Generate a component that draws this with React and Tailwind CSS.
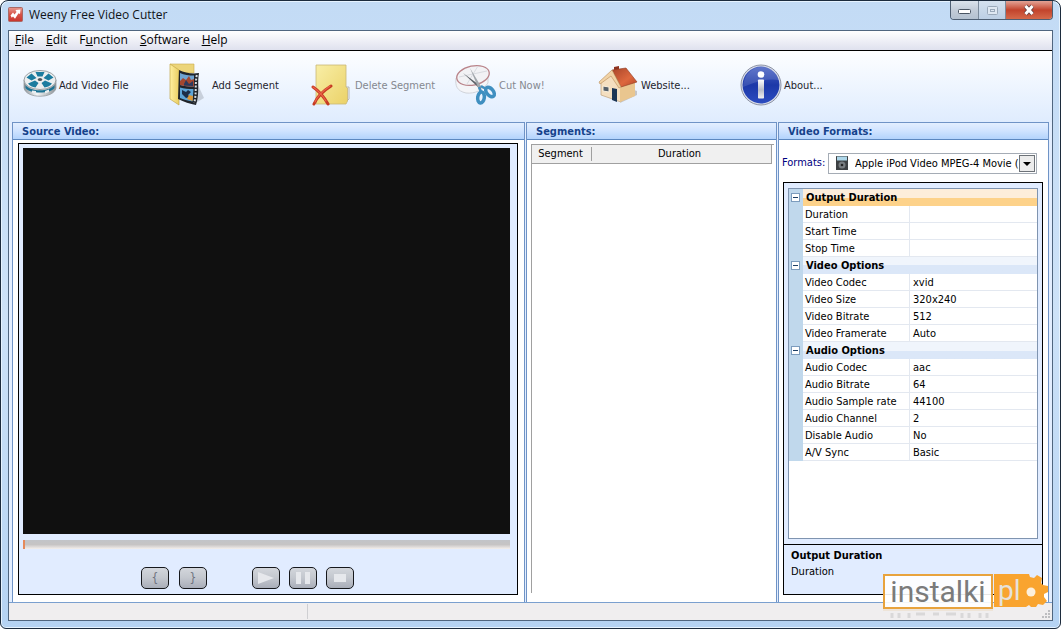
const tool = "flex items-center pb-[3px] text-left";

const SECTIONS = [
  { name: "Output Duration", selected: true, rows: [["Duration", ""], ["Start Time", ""], ["Stop Time", ""]] },
  {
    name: "Video Options",
    rows: [["Video Codec", "xvid"], ["Video Size", "320x240"], ["Video Bitrate", "512"], ["Video Framerate", "Auto"]],
  },
  {
    name: "Audio Options",
    rows: [
      ["Audio Codec", "aac"],
      ["Audio Bitrate", "64"],
      ["Audio Sample rate", "44100"],
      ["Audio Channel", "2"],
      ["Disable Audio", "No"],
      ["A/V Sync", "Basic"],
    ],
  },
];

function AppIcon() {
  return (
    <svg width="15" height="15" viewBox="0 0 15 15" aria-hidden="true">
      <defs>
        <linearGradient id="appRed" x1="0" y1="0" x2="0" y2="1">
          <stop offset="0" stopColor="#e89a90" />
          <stop offset="0.5" stopColor="#d65348" />
          <stop offset="1" stopColor="#c9342d" />
        </linearGradient>
      </defs>
      <rect x="0.5" y="0.5" width="14" height="14" rx="1" fill="url(#appRed)" stroke="#a96a66" />
      <path d="M2.500 8.500l2.500-3 1.500 2 2-2.500-1-2 5-.5-.5 4.500-1.500-.8-3.500 5.500L5 9.500l-1.200 1.200z" fill="#fff" />
    </svg>
  );
}

function ReelIcon() {
  return (
    <svg width="34" height="32" viewBox="0 0 34 32" aria-hidden="true">
      <defs>
        <linearGradient id="reelRim" x1="0" y1="0" x2="1" y2="0">
          <stop offset="0" stopColor="#8d9499" />
          <stop offset="0.4" stopColor="#f4f6f7" />
          <stop offset="1" stopColor="#8e9498" />
        </linearGradient>
      </defs>
      <path d="M1 11v8c2 11 30 11 32 0v-8z" fill="url(#reelRim)" stroke="#8c9296" strokeWidth="0.700" />
      <path d="M2.500 16v3c4 6 25 6 29 0v-3c-5 7-24 7-29 0z" fill="#1c7394" />
      <path d="M9 21.500v2.500l4 1v-3zM22 22v2.500l4-1.500v-2.500z" fill="#e9eef0" />
      <ellipse cx="17" cy="11" rx="16" ry="9.500" fill="#eceff0" stroke="#9aa0a4" />
      <path d="M12.500 3h9l-2 4.500h-5zM3.500 8.500l5-4 5 4.500-5 2.500zM30.500 8.500l-5-4-5 4.500 5 2.500zM5 14.500l7-3 3.500 2.500-3 4.500c-3-.5-6-1.500-7.500-4zM29 14.500l-7-3-3.500 2.500 3 4.500c3-.5 6-1.500 7.500-4z" fill="#1c7c9f" />
      <ellipse cx="17" cy="10.500" rx="2.200" ry="1.600" fill="#4e565b" />
    </svg>
  );
}

function FolderFilmIcon() {
  return (
    <svg width="36" height="44" viewBox="0 0 36 44" aria-hidden="true">
      <defs>
        <linearGradient id="fold" x1="0" y1="0" x2="1" y2="0">
          <stop offset="0" stopColor="#fff0a0" />
          <stop offset="1" stopColor="#e9cd62" />
        </linearGradient>
      </defs>
      <path d="M25 41l10-6-6-13z" fill="#8a8f98" opacity="0.350" />
      <path d="M1 1h24v9H10z" fill="#ecd57a" stroke="#c9ab4d" strokeWidth="0.600" />
      <path d="M1 1l9 6v35l-9-6z" fill="url(#fold)" stroke="#c3a849" strokeWidth="0.700" />
      <path d="M10 7c6 3 13 4 20 3-2 10 1 20-3 32-6-1-12-3-18-6z" fill="#20242a" />
      <path d="M11 10c4 2 9 2.500 14 2.500v11c-5 0-10-.5-14-1.500z" fill="#6fa3d0" />
      <path d="M11 18l3-3 3 2 3-4 2 4 3-1v7.500c-5 0-10-.5-14-1.500z" fill="#a4472f" />
      <path d="M15 21l2-4 3 4 4-3v5l-9-.5z" fill="#2b3a5e" />
      <path d="M11 24.500c4 1 9 1.500 13.500 1.500l-1 12.500c-5-1-9-2-12.500-3.500z" fill="#5da4d6" />
      <path d="M13 27l4 2 2-2 3 2-3 3 2 2-4 1-4-4z" fill="#1c2e48" />
      <path d="M18 36l2-4 4 1-.5 5z" fill="#dd9733" />
      <path d="M27.800 12c-2 10 0 18-2.600 28" fill="none" stroke="#d8dde0" strokeWidth="2" strokeDasharray="2 1.500" />
    </svg>
  );
}

function DeleteIcon() {
  return (
    <svg className="shrink-0" width="40" height="42" viewBox="0 0 40 42" aria-hidden="true">
      <defs>
        <linearGradient id="note" x1="0" y1="0" x2="1" y2="1">
          <stop offset="0" stopColor="#f8eea6" />
          <stop offset="1" stopColor="#ebd268" />
        </linearGradient>
      </defs>
      <path d="M34 23h4v12l-3 3h-2z" fill="#f0f0ee" stroke="#a4a8b0" strokeWidth="0.800" />
      <path d="M5 1h30v22l1.500 1v13L35 40H5z" fill="url(#note)" stroke="#c9b876" strokeWidth="0.800" />
      <path d="M2 23c6 4 11 10 15 17M20 22C12 27 6 33 3 40" fill="none" stroke="#c53a22" strokeWidth="3" strokeLinecap="round" />
      <path d="M2 23c6 4 10 9 13 14M19 22C12 27 6 33 4 38" fill="none" stroke="#ea6248" strokeWidth="1.200" strokeLinecap="round" />
    </svg>
  );
}

function ScissorsIcon() {
  return (
    <svg width="42" height="42" viewBox="0 0 42 42" aria-hidden="true">
      <path d="M1 14c-1 8 1 13 10 15 9 1 17-3 22-10V9z" fill="#f4f5f8" stroke="#d0d3d9" />
      <ellipse cx="18" cy="11.500" rx="16.500" ry="9.500" transform="rotate(-12 18 11.500)" fill="#f2f2f5" stroke="#b98389" strokeWidth="1.300" />
      <path d="M4 13l28-6M12 20l11-18" stroke="#d9dbe0" />
      <path d="M8 9l17 16 2-2z" fill="#5d6369" />
      <path d="M15 4l9 22 3-2z" fill="#a3a8ad" />
      <g fill="none" stroke="#3f8fc0" strokeWidth="3.500">
        <ellipse cx="26" cy="33.500" rx="3.300" ry="5.500" transform="rotate(8 26 33.500)" />
        <ellipse cx="35" cy="28" rx="3.300" ry="5.500" transform="rotate(-40 35 28)" />
      </g>
      <path d="M24 23l2 5M26 22l5 3" stroke="#3f8fc0" strokeWidth="2.500" />
    </svg>
  );
}

function HouseIcon() {
  return (
    <svg width="40" height="38" viewBox="0 0 40 38" aria-hidden="true">
      <defs>
        <linearGradient id="roof" x1="0" y1="0" x2="1" y2="1">
          <stop offset="0" stopColor="#a8452a" />
          <stop offset="0.600" stopColor="#dd683e" />
          <stop offset="1" stopColor="#b5482a" />
        </linearGradient>
      </defs>
      <path d="M22 37l17-8v-4l-6-2z" fill="#8b8074" opacity="0.400" />
      <path d="M16 1l5-1v9h-5z" fill="#8d3320" />
      <path d="M3 16L14 6l9 13v17L3 29z" fill="#f4dfc0" stroke="#bfa078" strokeWidth="0.700" />
      <path d="M22 19l15-5v16l-15 6z" fill="#e9c68f" />
      <path d="M14 4l14-2 11 14-16 5z" fill="url(#roof)" stroke="#8f3a22" strokeWidth="0.600" />
      <path d="M1 16L14 4l9 17-2 1-8-12L2 18z" fill="#f1d3a6" stroke="#b98b56" strokeWidth="0.600" />
      <path d="M14 22l5 1v13l-5-2z" fill="#1b3554" />
      <path d="M5 20l6 1v5l-6-1z" fill="#556069" stroke="#fbf0dc" />
    </svg>
  );
}

function InfoIcon() {
  return (
    <svg width="42" height="42" viewBox="0 0 42 42" aria-hidden="true">
      <defs>
        <linearGradient id="infoBlue" x1="0" y1="0" x2="0" y2="1">
          <stop offset="0" stopColor="#4b64c4" />
          <stop offset="0.500" stopColor="#1c38a8" />
          <stop offset="1" stopColor="#2c4cc0" />
        </linearGradient>
        <linearGradient id="infoStem" x1="0" y1="0" x2="0" y2="1">
          <stop offset="0" stopColor="#ffffff" />
          <stop offset="0.550" stopColor="#b9bdc9" />
          <stop offset="1" stopColor="#f0f0f2" />
        </linearGradient>
      </defs>
      <circle cx="21" cy="21" r="20" fill="#d9dde8" stroke="#8d93a6" />
      <circle cx="21" cy="21" r="18.500" fill="url(#infoBlue)" />
      <path d="M3 23C4 10 12 3 22 3c9 0 15 6 17 13-13-2-24 2-36 7z" fill="#fff" opacity="0.130" />
      <circle cx="21" cy="10.500" r="3.300" fill="#fff" />
      <rect x="18" y="15.500" width="6" height="19" rx="0.800" fill="url(#infoStem)" />
    </svg>
  );
}

function IpodIcon() {
  return (
    <svg className="pointer-events-none absolute top-[2px] left-[7px]" width="12" height="14" viewBox="0 0 12 14" aria-hidden="true">
      <rect width="12" height="14" rx="0.500" fill="#3d4043" />
      <rect x="1" y="0.500" width="10" height="4" fill="#aed7ea" />
      <circle cx="6" cy="9" r="3.500" fill="#777c80" />
      <circle cx="6" cy="9" r="1.300" fill="#222" />
    </svg>
  );
}

function Panel({ title, children }) {
  return (
    <section className="flex min-w-0 flex-col border border-b-0 border-[#6f93c6] bg-white">
      <h2 className="h-[17px] shrink-0 border-b border-[#5b87c0] bg-linear-to-b from-[#e3efff] via-[#cfe3ff] to-[#b3d3fc] pl-[9px] text-[11px] leading-[17px] font-bold text-[#15428b]">
        {title}
      </h2>
      {children}
    </section>
  );
}

function PlayerButton({ label, children, className }) {
  return (
    <button
      aria-label={label}
      className={
        "flex h-[22px] w-7 items-center justify-center rounded-[5px] border border-[#16181c] bg-linear-to-b from-[#d3d6dc] via-[#c3c7ce] to-[#a9aeb9] text-[12px] leading-none text-[#6d727d] " +
        className
      }
    >
      {children}
    </button>
  );
}

function Watermark() {
  return (
    <div className="absolute right-[12px] bottom-[6px] flex items-start">
      <div className="flex flex-col">
        <div className="flex h-[35px] w-[110px] items-center justify-center border-2 border-[#e8a33d] bg-white/90 font-['Roboto',sans-serif] text-[30px] leading-none text-[#7b7b7b]">
          instalki
        </div>
        <svg className="opacity-25" width="110" height="13" viewBox="0 0 110 13" aria-hidden="true">
          <path d="M0 1h110" stroke="#e8a33d" />
          <path d="M9 4v5M16 4v5M26 4v5M33 5h9M50 5h6M63 5h10M79 4v5M86 4v5M97 4v5M104 4v5" stroke="#999" strokeWidth="3" />
        </svg>
      </div>
      <div className="relative">
        <svg width="55" height="35" viewBox="0 0 55 35" aria-hidden="true">
          <path
            d="M1 0h35l1 3 4 1 3-3 5 3-1 5 2 2 5 1v6l-4 2 0 3 3 4-4 4-5-1-2 3h-5l-2-2-3 2H1z"
            fill="#f9a42f"
          />
          <circle cx="38" cy="18" r="4.500" fill="#fdf0dc" />
        </svg>
        <span className="absolute top-0 left-[5px] font-['Roboto',sans-serif] text-[28px] leading-[33px] text-[#e6e1da]">pl</span>
      </div>
    </div>
  );
}

export default function App() {
  return (
    <div className="relative flex min-h-screen flex-col overflow-hidden rounded-t-lg rounded-b-md border border-[#1c2b3d] bg-linear-to-b from-[#c3dbf5] via-[#cde2f8] to-[#b5d3f3] px-[7px] pb-[7px] font-['DejaVu_Sans_Condensed','DejaVu_Sans',sans-serif] text-[11px] leading-[17px] text-black shadow-[inset_0_0_0_1px_#e6f3ff]">
      <header className="flex h-[29px] shrink-0 items-center pb-[2px]">
        <AppIcon />
        <h1 className="ml-[6px] grow font-['Open_Sans',sans-serif] text-[12px] text-[#101418]">Weeny Free Video Cutter</h1>
        <div className="flex h-[19px] self-start overflow-hidden rounded-b-[4px] border border-t-0 border-[#4e5f73]">
          <button aria-label="Minimize" className="flex w-7 items-center justify-center border-r border-[#7c8b9c] bg-linear-to-b from-[#dbe3ec] via-[#c2ccd8] to-[#b4c1d0] pt-1">
            <svg width="13" height="6" aria-hidden="true"><rect x="0.500" y="0.500" width="12" height="4" rx="1" fill="#fff" stroke="#4a5563" /></svg>
          </button>
          <button aria-label="Maximize" disabled className="flex w-[27px] items-center justify-center border-r border-[#7c8b9c] bg-linear-to-b from-[#d5e1ee] to-[#bccfe4]">
            <svg width="11" height="9" aria-hidden="true"><rect x="0.500" y="0.500" width="10" height="8" rx="1" fill="#dfe8f2" stroke="#9aa9ba" /><rect x="3.500" y="3.500" width="4" height="2" fill="none" stroke="#9aa9ba" /></svg>
          </button>
          <button aria-label="Close" className="flex w-[46px] items-center justify-center bg-linear-to-b from-[#e2a396] via-[#c2432c] to-[#d5694a]">
            <svg width="14" height="12" viewBox="0 0 14 12" aria-hidden="true"><path d="M3.500 2l7 8M10.500 2l-7 8" stroke="#5e3a3a" strokeWidth="4.500" /><path d="M3.500 2l7 8M10.500 2l-7 8" stroke="#fff" strokeWidth="3" /></svg>
          </button>
        </div>
      </header>

      <div className="flex grow flex-col border border-[#50667f] bg-[#e3eeff]">
        <nav className="flex h-5 shrink-0 items-center gap-3 border-b border-black bg-linear-to-b from-white to-[#dfe1ee] px-[6px] pb-[2px] font-['Open_Sans',sans-serif] text-[12px]">
          <button><u>F</u>ile</button>
          <button><u>E</u>dit</button>
          <button>F<u>u</u>nction</button>
          <button><u>S</u>oftware</button>
          <button><u>H</u>elp</button>
        </nav>

        <div className="grid h-[71px] shrink-0 grid-cols-[146px_142px_144px_143px_142px_auto] bg-linear-to-b from-[#fdfeff] to-[#dfecfe] pl-[14px] text-[#24242c]">
          <button className={tool}><ReelIcon /><span className="ml-[2px]">Add Video File</span></button>
          <button className={tool}><FolderFilmIcon /><span className="ml-[7px]">Add Segment</span></button>
          <button className={tool + " text-[#85888f]"} disabled><DeleteIcon /><span className="ml-1">Delete Segment</span></button>
          <button className={tool + " text-[#85888f]"} disabled><ScissorsIcon /><span className="ml-[2px]">Cut Now!</span></button>
          <button className={tool}><HouseIcon /><span className="ml-[3px]">Website...</span></button>
          <button className={tool}><InfoIcon /><span className="ml-[2px]">About...</span></button>
        </div>

        <main className="grid grow grid-cols-[513fr_251fr_271fr] gap-px px-[3px]">
          <Panel title="Source Video:">
            <div className="mr-[6px] mt-[3px] mb-[7px] ml-[5px] flex grow flex-col border border-black bg-[#e1ecff] px-1 pt-1">
              <div className="mr-[3px] min-h-[386px] grow bg-[#101010]" />
              <div className="mt-[6px] mr-[3px] h-[9px] border-l-2 border-[#e58a5c] bg-linear-to-b from-[#c2c4c8] via-[#c6c4c4] to-[#f4efec]" />
              <div className="flex h-[45px] items-center pt-[13px] pl-[118px]">
                <PlayerButton label="Segment start" className="mr-[10px]">{"{"}</PlayerButton>
                <PlayerButton label="Segment end" className="mr-[45px]">{"}"}</PlayerButton>
                <PlayerButton label="Play" className="mr-[9px]">
                  <svg width="16" height="12" aria-hidden="true"><path d="M0 0l16 6-16 6z" fill="#e6e8ec" /></svg>
                </PlayerButton>
                <PlayerButton label="Pause" className="mr-[9px]">
                  <svg width="14" height="12" aria-hidden="true"><path d="M0 0h5v12H0zM9 0h5v12H9z" fill="#e6e8ec" /></svg>
                </PlayerButton>
                <PlayerButton label="Stop" className="">
                  <svg width="12" height="8" aria-hidden="true"><rect width="12" height="8" fill="#e6e8ec" /></svg>
                </PlayerButton>
              </div>
            </div>
          </Panel>

          <Panel title="Segments:">
            <div className="mt-1 mr-[2px] mb-[9px] ml-1 grow border-t border-l border-[#a0a0a0] pr-[2px]">
              <table className="w-full border-collapse">
                <thead>
                  <tr className="h-[18px] border-r border-b border-[#a0a0a0] bg-[#f0f0f0]">
                    <th className="w-[60px] p-0 font-normal"><div className="border-r border-[#a0a0a0] pr-[2px] leading-[14px]">Segment</div></th>
                    <th className="p-0 pr-1 font-normal leading-[14px]">Duration</th>
                  </tr>
                </thead>
              </table>
            </div>
          </Panel>

          <Panel title="Video Formats:">
            <div className="flex h-[42px] shrink-0 items-center pt-[5px] pr-[11px] pl-[3px]">
              <label htmlFor="format" className="w-[46px] shrink-0 pb-[2px] text-[#00007f]">Formats:</label>
              <div className="relative h-[21px] grow border border-[#a5acb5] bg-white">
                <IpodIcon />
                <select id="format" className="block h-[19px] w-full appearance-none pr-[16px] pl-[26px] text-[11px]">
                  <option>Apple iPod Video MPEG-4 Movie (</option>
                </select>
                <span className="pointer-events-none absolute top-[1px] right-[1px] flex h-[17px] w-4 items-center justify-center border border-[#6d7278] bg-[#ececec] pt-px">
                  <svg width="8" height="4" aria-hidden="true"><path d="M0 0h8L4 4z" fill="#000" /></svg>
                </span>
              </div>
            </div>
            <div className="mr-[5px] mb-[7px] ml-1 flex grow flex-col border border-black bg-[#e1ecff]">
              <div className="mx-1 mt-[5px] mb-[5px] grow border border-[#7f94b0] bg-white">
                <table className="w-full table-fixed border-separate border-spacing-0">
                  <colgroup>
                    <col className="w-[14px]" />
                    <col className="w-[107px]" />
                    <col />
                  </colgroup>
                  {SECTIONS.map((s) => (
                    <tbody key={s.name}>
                      <tr className="h-[17px]">
                        <td className="bg-[#c0d8ec] p-0">
                          <button aria-label={"Collapse " + s.name} className="ml-[2px] flex size-[9px] items-center justify-center border border-[#7c9cbd] bg-white">
                            <span className="h-px w-[5px] bg-[#1d3f66]" />
                          </button>
                        </td>
                        <th
                          colSpan={2}
                          className={
                            "p-0 pl-[3px] text-left leading-4 font-bold " +
                            (s.selected
                              ? "bg-linear-to-b from-[#fdeedb] from-50% to-[#fdd28a] to-50%"
                              : "bg-linear-to-b from-[#f0f5fc] from-50% to-[#dbe7f8] to-50%")
                          }
                        >
                          {s.name}
                        </th>
                      </tr>
                      {s.rows.map(([k, v]) => (
                        <tr key={k} className="h-[17px]">
                          <td className="bg-[#c0d8ec] p-0" />
                          <td className="border-r border-b border-[#e3e8f0] p-0 pt-[2px] pl-[2px] leading-[14px]">{k}</td>
                          <td className="border-b border-[#e3e8f0] p-0 pt-[2px] pl-[3px] leading-[14px]">{v}</td>
                        </tr>
                      ))}
                    </tbody>
                  ))}
                </table>
              </div>
              <div className="h-[50px] border-t border-black px-[7px] pt-[3px] leading-4">
                <p className="font-bold">Output Duration</p>
                <p>Duration</p>
              </div>
            </div>
          </Panel>
        </main>

        <footer className="flex h-[18px] shrink-0 items-end justify-between border-t border-[#7ba0cf] bg-[#f0eeef]">
          <div className="m-px w-[298px] self-stretch border-r border-[#cfcfd2]" />
          <svg className="m-[2px]" width="8" height="8" aria-hidden="true">
            <path d="M6 0h2v2H6zM6 3h2v2H6zM6 6h2v2H6zM3 3h2v2H3zM3 6h2v2H3zM0 6h2v2H0z" fill="#bdbdc0" />
          </svg>
        </footer>
      </div>
      <Watermark />
    </div>
  );
}
